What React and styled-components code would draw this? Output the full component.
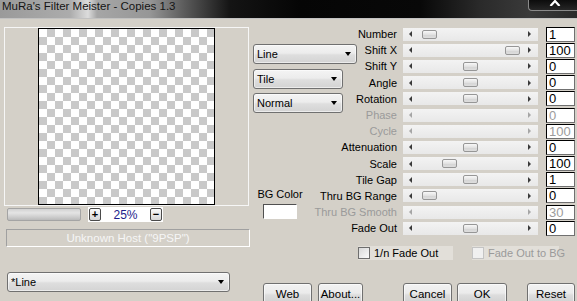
import styled, { createGlobalStyle } from "styled-components";

const GlobalStyle = createGlobalStyle`
  html, body {
    margin: 0;
    padding: 0;
    background: #d4d0c8;
    overflow: hidden;
  }
  body {
    font-family: "Liberation Sans", Arial, sans-serif;
  }
`;

const PARAMS = [
  { label: "Number", value: "1", pos: 19 },
  { label: "Shift X", value: "100", pos: 102 },
  { label: "Shift Y", value: "0", pos: 60 },
  { label: "Angle", value: "0", pos: 60 },
  { label: "Rotation", value: "0", pos: 60 },
  { label: "Phase", value: "0", disabled: true },
  { label: "Cycle", value: "100", disabled: true },
  { label: "Attenuation", value: "0", pos: 60 },
  { label: "Scale", value: "100", pos: 39 },
  { label: "Tile Gap", value: "1", pos: 60 },
  { label: "Thru BG Range", value: "0", pos: 19 },
  { label: "Thru BG Smooth", value: "30", disabled: true },
  { label: "Fade Out", value: "0", pos: 60 },
];

const Select = ({ children, width }) => (
  <SelectBox $width={width}>
    <SelectText>{children}</SelectText>
    <Caret />
  </SelectBox>
);

const App = () => {
  return (
    <Window>
      <GlobalStyle />
      <TitleBar>
        <TitleText>MuRa's Filter Meister - Copies 1.3</TitleText>
        <CloseButton>
          <svg width="12" height="6" viewBox="0 0 12 6">
            <polyline points="1.5,6 6,1 10.5,6" fill="none" stroke="#fff" strokeWidth="2.2" />
          </svg>
        </CloseButton>
      </TitleBar>
      <Body>
        <LeftPanel>
          <PreviewFrame>
            <Checker />
          </PreviewFrame>
          <ZoomRow>
            <ZoomSlider />
            <ZoomBox>
              <StepButton>+</StepButton>
              <Percent>25%</Percent>
              <StepButton>−</StepButton>
            </ZoomBox>
          </ZoomRow>
          <StatusField>Unknown Host ("9PSP")</StatusField>
          <BottomSelect>
            <Select width={223}>*Line</Select>
          </BottomSelect>
        </LeftPanel>

        <RightPanel>
          <ParamGrid>
            <Side>
              <Select width={104}>Line</Select>
              <SelectGap $h={5} />
              <Select width={90}>Tile</Select>
              <SelectGap $h={4} />
              <Select width={90}>Normal</Select>
              <BgGroup>
                <BgLabel>BG Color</BgLabel>
                <BgSwatch />
              </BgGroup>
            </Side>
            {PARAMS.map(({ label, value, pos, disabled }) => (
              <Row key={label}>
                <ParamLabel $disabled={disabled}>{label}</ParamLabel>
                <Track>
                  <Arrow $dir="left" $disabled={disabled} />
                  <Arrow $dir="right" $disabled={disabled} />
                  {!disabled && <Thumb $pos={pos} />}
                </Track>
                <ValueBox $disabled={disabled}>{value}</ValueBox>
              </Row>
            ))}
          </ParamGrid>

          <CheckRow>
            <CheckItem $width={95}>
              <CheckBox />
              <CheckLabel>1/n Fade Out</CheckLabel>
            </CheckItem>
            <CheckItem $width={87}>
              <CheckBox $disabled />
              <CheckLabel $disabled>Fade Out to BG</CheckLabel>
            </CheckItem>
          </CheckRow>

          <ButtonRow>
            <Button $width={49}>Web</Button>
            <Button $width={45} $gap={6}>About...</Button>
            <Button $width={49} $gap={40}>Cancel</Button>
            <Button $width={50} $gap={5}>OK</Button>
            <Button $width={48} $gap={20}>Reset</Button>
          </ButtonRow>
        </RightPanel>
      </Body>
    </Window>
  );
};

export default App;

const Window = styled.div`
  width: 577px;
  height: 301px;
  display: flex;
  flex-direction: column;
  overflow: hidden;
  background: #d4d0c8;
`;

const TitleBar = styled.div`
  display: flex;
  align-items: flex-start;
  height: 18px;
  flex-shrink: 0;
  border-bottom: 1px solid #c2c2c2;
  background: linear-gradient(
    90deg,
    #9a9a9a 0,
    #acacac 70px,
    #dcdcdc 88px,
    #a6a6a6 97px,
    #969696 150px,
    #5a5a5a 185px,
    #141414 230px,
    #050505 300px,
    #080808 420px,
    #2a2a2a 480px,
    #3a3a3a 530px,
    #2a2a2a 577px
  );
`;

const TitleText = styled.span`
  padding-left: 2px;
  font-size: 11.5px;
  line-height: 12px;
  color: #141414;
  white-space: nowrap;
`;

const CloseButton = styled.div`
  margin-left: auto;
  width: 44px;
  height: 10px;
  border: 1px solid #8a8a8a;
  border-top: 0;
  border-right: 0;
  border-bottom-left-radius: 4px;
  background: linear-gradient(#0c0c0c, #262626);
  display: flex;
  justify-content: center;
  padding-left: 4px;

  svg {
    display: block;
  }
`;

const Body = styled.div`
  display: flex;
  flex: 1;
`;

const LeftPanel = styled.div`
  width: 253px;
  flex-shrink: 0;
  box-sizing: border-box;
  padding: 8px 0 0 4px;
  display: flex;
  flex-direction: column;
  align-items: flex-start;
`;

const PreviewFrame = styled.div`
  width: 245px;
  height: 179px;
  box-sizing: border-box;
  border: 1px solid #f6f6f6;
  display: flex;
  justify-content: center;
`;

const Checker = styled.div`
  width: 177px;
  height: 177px;
  box-sizing: border-box;
  border: 1px solid #000;
  background: conic-gradient(#c9c9c9 0 25%, #fff 0 50%, #c9c9c9 0 75%, #fff 0);
  background-size: 16px 16px;
`;

const ZoomRow = styled.div`
  display: flex;
  align-items: center;
  height: 15px;
  margin: 1px 0 0 3px;
`;

const ZoomSlider = styled.div`
  width: 74px;
  height: 13px;
  box-sizing: border-box;
  border: 1px solid #a4a4a4;
  border-radius: 2px;
  background: linear-gradient(#d2d2d2, #e4e4e4 35%, #d2d2d2 65%, #bababa);
`;

const ZoomBox = styled.div`
  margin-left: 7px;
  width: 75px;
  height: 15px;
  box-sizing: border-box;
  padding: 0 1px;
  background: #fff;
  display: flex;
  align-items: center;
`;

const StepButton = styled.span`
  width: 12px;
  height: 13px;
  box-sizing: border-box;
  border: 1px solid #4a4a4a;
  border-radius: 2px;
  background: linear-gradient(#fafafa, #d6d6d6);
  display: flex;
  align-items: center;
  justify-content: center;
  font-size: 11px;
  font-weight: bold;
  line-height: 1;
  color: #000;
`;

const Percent = styled.span`
  flex: 1;
  text-align: center;
  font-size: 12px;
  color: #1c1c8c;
`;

const StatusField = styled.div`
  margin: 7px 0 0 2px;
  width: 244px;
  height: 18px;
  box-sizing: border-box;
  border: 1px solid #fff;
  border-top-color: #a0a0a0;
  border-left-color: #a0a0a0;
  font-size: 11.5px;
  line-height: 16px;
  text-align: center;
  color: #f6f6f6;
`;

const BottomSelect = styled.div`
  margin: 25px 0 0 3px;
`;

const SelectBox = styled.div`
  width: ${(p) => p.$width}px;
  height: 20px;
  flex-shrink: 0;
  box-sizing: border-box;
  border: 1px solid #707070;
  border-radius: 3px;
  box-shadow: inset 0 0 0 1px rgba(255, 255, 255, 0.55);
  background: linear-gradient(#f4f4f4, #ececec 45%, #dedede 55%, #d3d3d3);
  display: flex;
  align-items: center;
  padding: 0 5px 0 3px;
  font-size: 11px;
  color: #000;
`;

const SelectText = styled.span`
  flex: 1;
  white-space: nowrap;
`;

const Caret = styled.span`
  width: 0;
  height: 0;
  border-left: 3.5px solid transparent;
  border-right: 3.5px solid transparent;
  border-top: 4px solid #000;
`;

const RightPanel = styled.div`
  flex: 1;
  display: flex;
  flex-direction: column;
  padding-top: 7px;
`;

const ParamGrid = styled.div`
  display: grid;
  grid-template-columns: 104px 46px 143px 29px;
  grid-template-rows: repeat(13, 16.2px);
`;

const Row = styled.div`
  display: contents;
`;

const Side = styled.div`
  grid-column: 1;
  grid-row: 1 / span 13;
  display: flex;
  flex-direction: column;
  align-items: flex-start;
  padding-top: 18px;
`;

const SelectGap = styled.div`
  height: ${(p) => p.$h}px;
`;

const BgGroup = styled.div`
  margin: 75px 0 0 4px;
  width: 46px;
  display: flex;
  flex-direction: column;
  align-items: center;
`;

const BgLabel = styled.span`
  font-size: 11px;
  line-height: 13px;
  white-space: nowrap;
`;

const BgSwatch = styled.div`
  margin-top: 3px;
  width: 34px;
  height: 15px;
  box-sizing: border-box;
  background: #fff;
  border: 1px solid #fff;
  border-top-color: #505050;
  border-left-color: #505050;
`;

const ParamLabel = styled.div`
  display: flex;
  justify-content: flex-end;
  align-items: center;
  padding-right: 6px;
  font-size: 11px;
  white-space: nowrap;
  color: ${(p) => (p.$disabled ? "#9a9a9a" : "#000")};
`;

const Track = styled.div`
  position: relative;
  align-self: center;
  width: 135px;
  height: 13px;
  box-sizing: border-box;
  padding: 0 7px 0 6px;
  display: flex;
  align-items: center;
  justify-content: space-between;
  background: linear-gradient(#f3f3f3, #e8e8e8);
`;

const Arrow = styled.span`
  width: 0;
  height: 0;
  border-top: 3px solid transparent;
  border-bottom: 3px solid transparent;
  ${(p) =>
    p.$dir === "left"
      ? `border-right: 3px solid ${p.$disabled ? "#a6a6a6" : "#3a3a3a"};`
      : `border-left: 3px solid ${p.$disabled ? "#a6a6a6" : "#3a3a3a"};`}
`;

const Thumb = styled.span`
  position: absolute;
  top: 2px;
  left: ${(p) => p.$pos}px;
  width: 15px;
  height: 9px;
  box-sizing: border-box;
  border: 1px solid #969696;
  border-radius: 2px;
  background: linear-gradient(#f8f8f8, #e2e2e2 50%, #d4d4d4 51%, #dedede);
`;

const ValueBox = styled.div`
  align-self: center;
  width: 29px;
  height: 15px;
  box-sizing: border-box;
  background: #fff;
  border: 1px solid #000;
  border-right-color: #707070;
  border-bottom-color: #707070;
  padding-left: 2px;
  font-size: 13px;
  line-height: 13px;
  color: ${(p) => (p.$disabled ? "#9c9c9c" : "#000")};
`;

const CheckRow = styled.div`
  display: flex;
  gap: 19px;
  margin-top: 10px;
  padding-left: 105px;
  height: 14px;
`;

const CheckItem = styled.div`
  width: ${(p) => p.$width}px;
  display: flex;
  align-items: center;
  background: #e2dfd9;
`;

const CheckBox = styled.span`
  width: 12px;
  height: 12px;
  box-sizing: border-box;
  border: 1px solid ${(p) => (p.$disabled ? "#c4c4c4" : "#6e6e6e")};
  background: ${(p) =>
    p.$disabled ? "#f0f0f0" : "linear-gradient(135deg, #d8d8d8, #fbfbfb)"};
  flex-shrink: 0;
`;

const CheckLabel = styled.span`
  margin-left: 4px;
  font-size: 11px;
  white-space: nowrap;
  color: ${(p) => (p.$disabled ? "#9a9a9a" : "#000")};
`;

const ButtonRow = styled.div`
  display: flex;
  margin-top: 23px;
  padding-left: 10px;
`;

const Button = styled.div`
  width: ${(p) => p.$width}px;
  margin-left: ${(p) => p.$gap || 0}px;
  height: 22px;
  box-sizing: border-box;
  border: 1px solid #707070;
  border-radius: 3px;
  box-shadow: inset 0 0 0 1px rgba(255, 255, 255, 0.6);
  background: linear-gradient(#f2f2f2, #ebebeb 45%, #dddddd 55%, #cfcfcf);
  display: flex;
  align-items: center;
  justify-content: center;
  font-size: 11.5px;
  color: #000;
`;
